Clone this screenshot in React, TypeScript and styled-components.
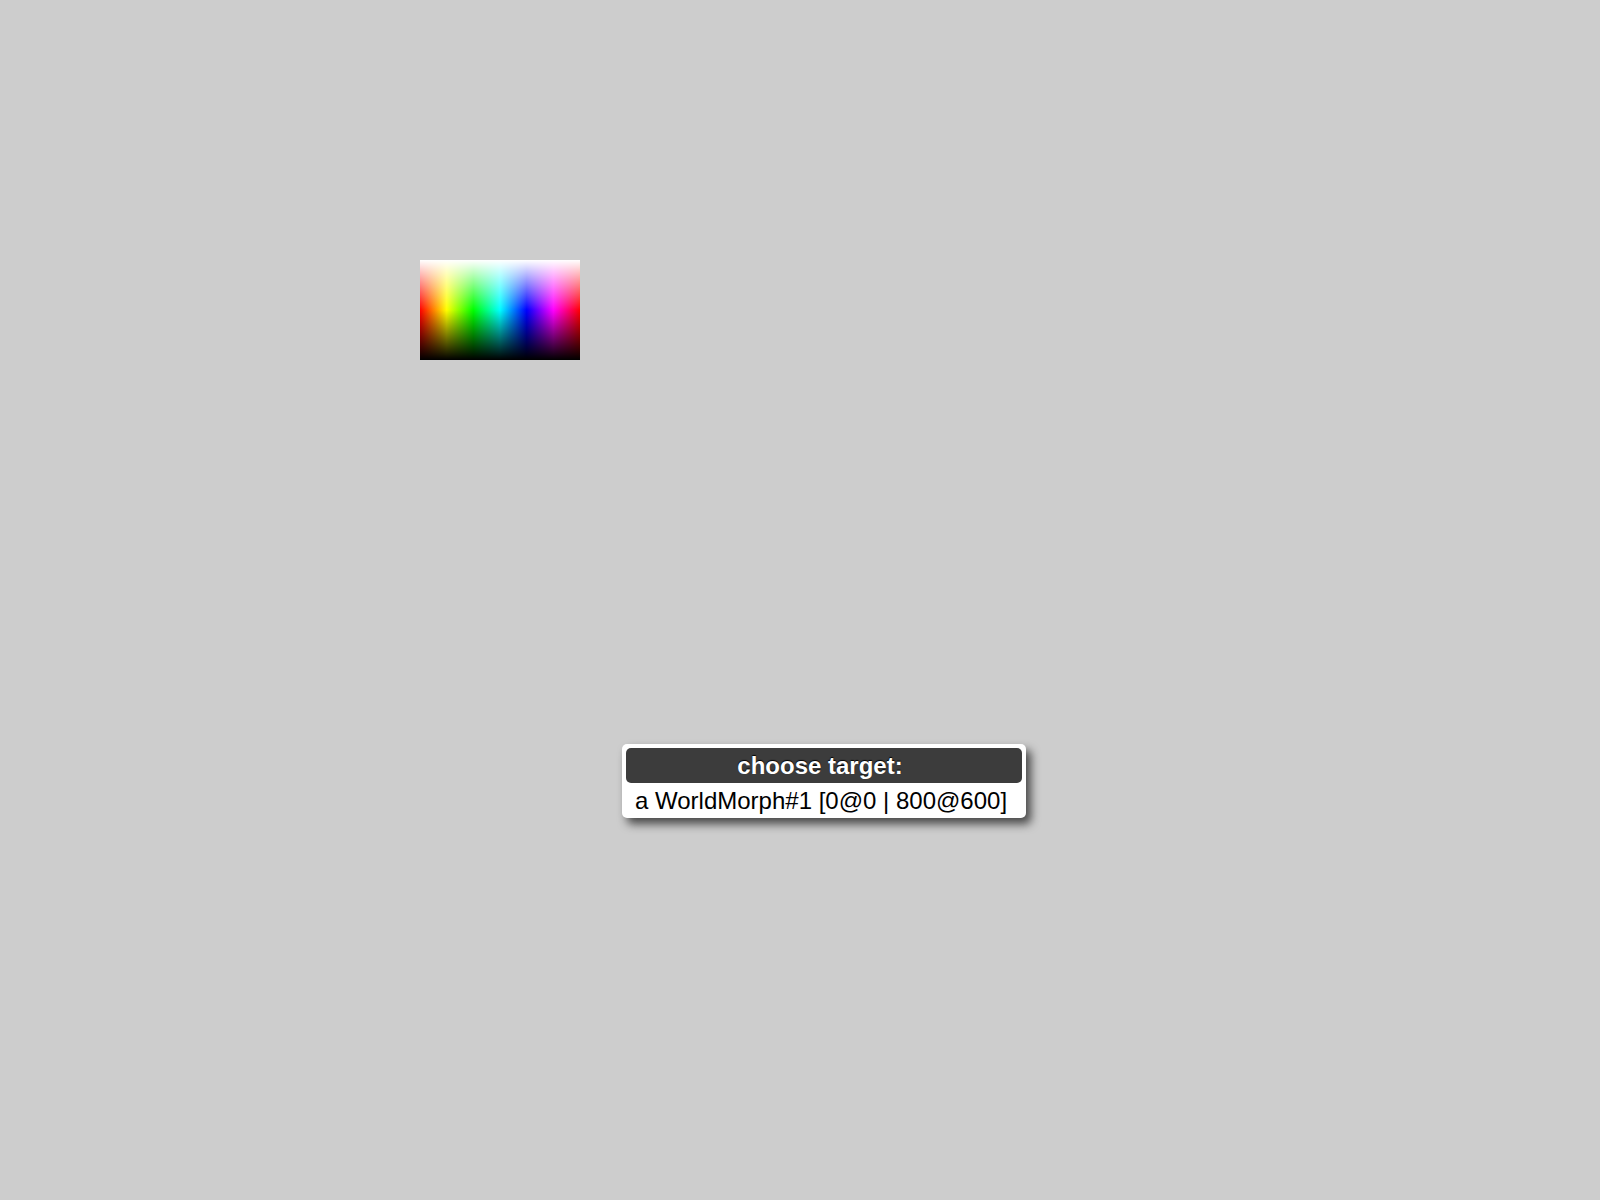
import React from "react";
import styled, { createGlobalStyle } from "styled-components";

const GlobalStyle = createGlobalStyle`
  html, body {
    margin: 0;
    padding: 0;
    background: #cdcdcd;
  }
  body {
    font-family: "Liberation Sans", Arial, Helvetica, sans-serif;
  }
`;

const World = styled.div`
  position: relative;
  width: 1600px;
  height: 1200px;
  background: #cdcdcd;
  overflow: hidden;
`;

const Palette = styled.div`
  position: absolute;
  left: 420px;
  top: 260px;
  width: 160px;
  height: 100px;
  background:
    linear-gradient(to bottom, #ffffff 0%, rgba(255,255,255,0) 50%, rgba(0,0,0,0) 50%, #000000 100%),
    linear-gradient(to right, #ff0000 0%, #ffff00 16.67%, #00ff00 33.33%, #00ffff 50%, #0000ff 66.67%, #ff00ff 83.33%, #ff0000 100%);
`;

const Menu = styled.div`
  position: absolute;
  left: 622px;
  top: 744px;
  width: 396px;
  padding: 4px;
  background: #ffffff;
  border-radius: 5px;
  box-shadow: 5px 6px 10px rgba(0, 0, 0, 0.65);
  display: flex;
  flex-direction: column;
`;

const Title = styled.div`
  height: 35px;
  padding-right: 8px;
  background: #3c3c3c;
  border-radius: 5px;
  color: #ffffff;
  font-weight: bold;
  font-size: 24px;
  display: flex;
  align-items: center;
  justify-content: center;
  text-shadow: 0 -1px 1px #000;
`;

const Item = styled.div`
  height: 31px;
  padding: 2px 0 0 9px;
  box-sizing: border-box;
  font-size: 24px;
  line-height: 31px;
  color: #000000;
  white-space: nowrap;
`;

export default function App() {
  return (
    <World>
      <GlobalStyle />
      <Palette />
      <Menu>
        <Title>choose target:</Title>
        <Item>a WorldMorph#1 [0@0 | 800@600]</Item>
      </Menu>
    </World>
  );
}
